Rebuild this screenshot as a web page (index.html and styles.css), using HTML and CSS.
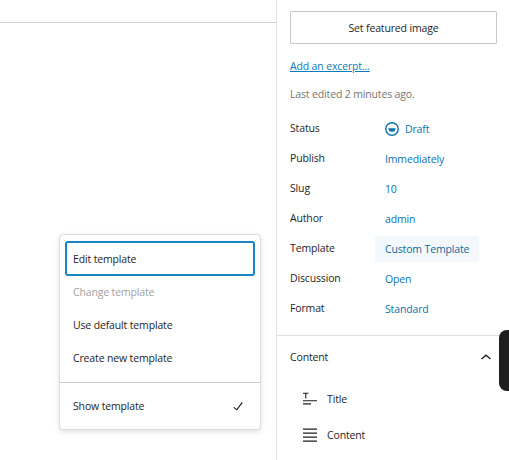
FILE: index.html
```html
<!DOCTYPE html>
<html lang="en">
<head>
<meta charset="utf-8">
<title>Template settings</title>
<link rel="stylesheet" href="styles.css">
</head>
<body>
<div class="app">
  <main class="canvas">
    <div class="canvas-top"></div>
    <div class="menu">
      <div class="menu-group">
        <div class="menu-item focused">Edit template</div>
        <div class="menu-item disabled">Change template</div>
        <div class="menu-item">Use default template</div>
        <div class="menu-item">Create new template</div>
      </div>
      <div class="menu-group">
        <div class="menu-item check-item">Show template
          <svg class="check" width="24" height="24" viewBox="0 0 24 24"><path d="M16.7 7.1l-6.3 8.5-3.3-2.5-.9 1.2 4.5 3.4L17.900 8z"/></svg>
        </div>
      </div>
    </div>
  </main>
  <aside class="sidebar">
    <section class="summary">
      <button class="featured">Set featured image</button>
      <a class="excerpt">Add an excerpt...</a>
      <p class="edited">Last edited 2 minutes ago.</p>
      <div class="rows">
        <div class="row"><span class="label">Status</span><span class="value status">
          <svg class="status-icon" width="16" height="16" viewBox="0 0 16 16"><circle cx="8" cy="8" r="6.2" class="ring"/><path d="M4.4 7.2h7.2a3.6 3.6 0 0 1-7.2 0z" class="fill"/></svg>
          Draft</span></div>
        <div class="row"><span class="label">Publish</span><span class="value">Immediately</span></div>
        <div class="row"><span class="label">Slug</span><span class="value">10</span></div>
        <div class="row"><span class="label">Author</span><span class="value">admin</span></div>
        <div class="row"><span class="label">Template</span><span class="value active">Custom Template</span></div>
        <div class="row"><span class="label">Discussion</span><span class="value">Open</span></div>
        <div class="row"><span class="label">Format</span><span class="value">Standard</span></div>
      </div>
    </section>
    <section class="content-panel">
      <div class="panel-head">
        <span>Content</span>
        <svg width="16" height="16" viewBox="0 0 16 16"><path d="M3.500 10l4.500-3.800 4.500 3.800" class="chev"/></svg>
      </div>
      <div class="block">
        <svg width="14" height="16" viewBox="0 0 14 16"><path d="M0 1.700h5.500v1H3.300v4.800H2.200V2.700H0zM0 9.200h14v1H0zM0 12.200h8v1.300H0z"/></svg>
        Title
      </div>
      <div class="block">
        <svg width="14" height="16" viewBox="0 0 14 16"><path d="M0 1.500h14v1.300H0zM0 5.500h14v1.300H0zM0 9.500h14v1.300H0zM0 13.500h14v1.300H0z"/></svg>
        Content
      </div>
    </section>
    <div class="dark-tab"></div>
  </aside>
</div>
</body>
</html>
```

FILE: styles.css
```css
* { box-sizing: border-box; }
html, body { margin: 0; height: 100%; overflow: hidden; background: #fff; }
body { font-family: "Open Sans", "Noto Sans", sans-serif; font-size: 10.5px; letter-spacing: -0.15px; color: #1e1e1e; }
.app { display: flex; width: 509px; height: 460px; }
.canvas { position: relative; width: 277px; border-right: 1px solid #e0e0e0; }
.canvas-top { height: 23px; border-bottom: 1px solid #d4d4d4; }
.menu { position: absolute; left: 59px; top: 234px; width: 202px; height: 196px; background: #fff; border-radius: 4px; border: 1px solid #dcdcdc; box-shadow: 0 2px 5px rgba(0,0,0,.12); }
.menu-group { padding: 6px 5px 0; }
.menu-group + .menu-group { border-top: 1px solid #ccc; margin-top: 7px; padding-top: 6px; }
.menu-item { height: 33.33px; padding: 0 8px; display: flex; align-items: center; justify-content: space-between; }
.menu-item.focused { height: 35px; border: 2px solid #1a84c2; border-radius: 3px; padding: 0 6px; margin-bottom: -1px; }
.menu-item.disabled { color: #a2a2a2; }
.check { fill: #1e1e1e; margin-right: -3px; transform: scale(.8); }
.sidebar { position: relative; flex: 1; overflow: hidden; }
.summary { padding: 11px 12px 0 13px; height: 336px; border-bottom: 1px solid #e0e0e0; }
.featured { display: block; width: 207px; height: 33px; background: #fff; border: 1px solid #c8c8c8; border-radius: 1px; font: inherit; letter-spacing: inherit; color: #1e1e1e; padding: 0; }
.excerpt { display: block; margin-top: 14px; height: 16px; line-height: 16px; color: #0a7ab8; text-decoration: underline; }
.edited { margin: 12px 0 0; height: 16px; line-height: 16px; color: #757575; }
.rows { margin-top: 12px; }
.row { display: flex; height: 30px; align-items: center; }
.label { width: 95px; margin-top: -2px; }
.value { color: #0a72ad; display: flex; align-items: center; height: 26px; }
.status { gap: 5px; }
.status-icon { margin-left: -1px; }
.ring { fill: none; stroke: #0a72ad; stroke-width: 1.4; }
.fill { fill: #0a72ad; }
.active { background: #f2f8fb; margin-left: -10px; padding: 0 10px; color: #136a9a; }
.content-panel { padding: 0 12px 0 13px; }
.panel-head { height: 42px; display: flex; justify-content: space-between; align-items: center; font-weight: 500; }
.panel-head svg { margin-right: 3px; margin-left: auto; }
.chev { fill: none; stroke: #1e1e1e; stroke-width: 1.3; }
.block { display: flex; align-items: center; height: 36px; gap: 10px; padding-left: 13px; }
.block svg { fill: #1e1e1e; flex: none; }
.panel-head + .block { margin-top: 3px; }
.dark-tab { position: absolute; left: 222px; top: 330px; width: 20px; height: 61px; background: #1e1e1e; border-radius: 8px 0 0 8px; }
```
